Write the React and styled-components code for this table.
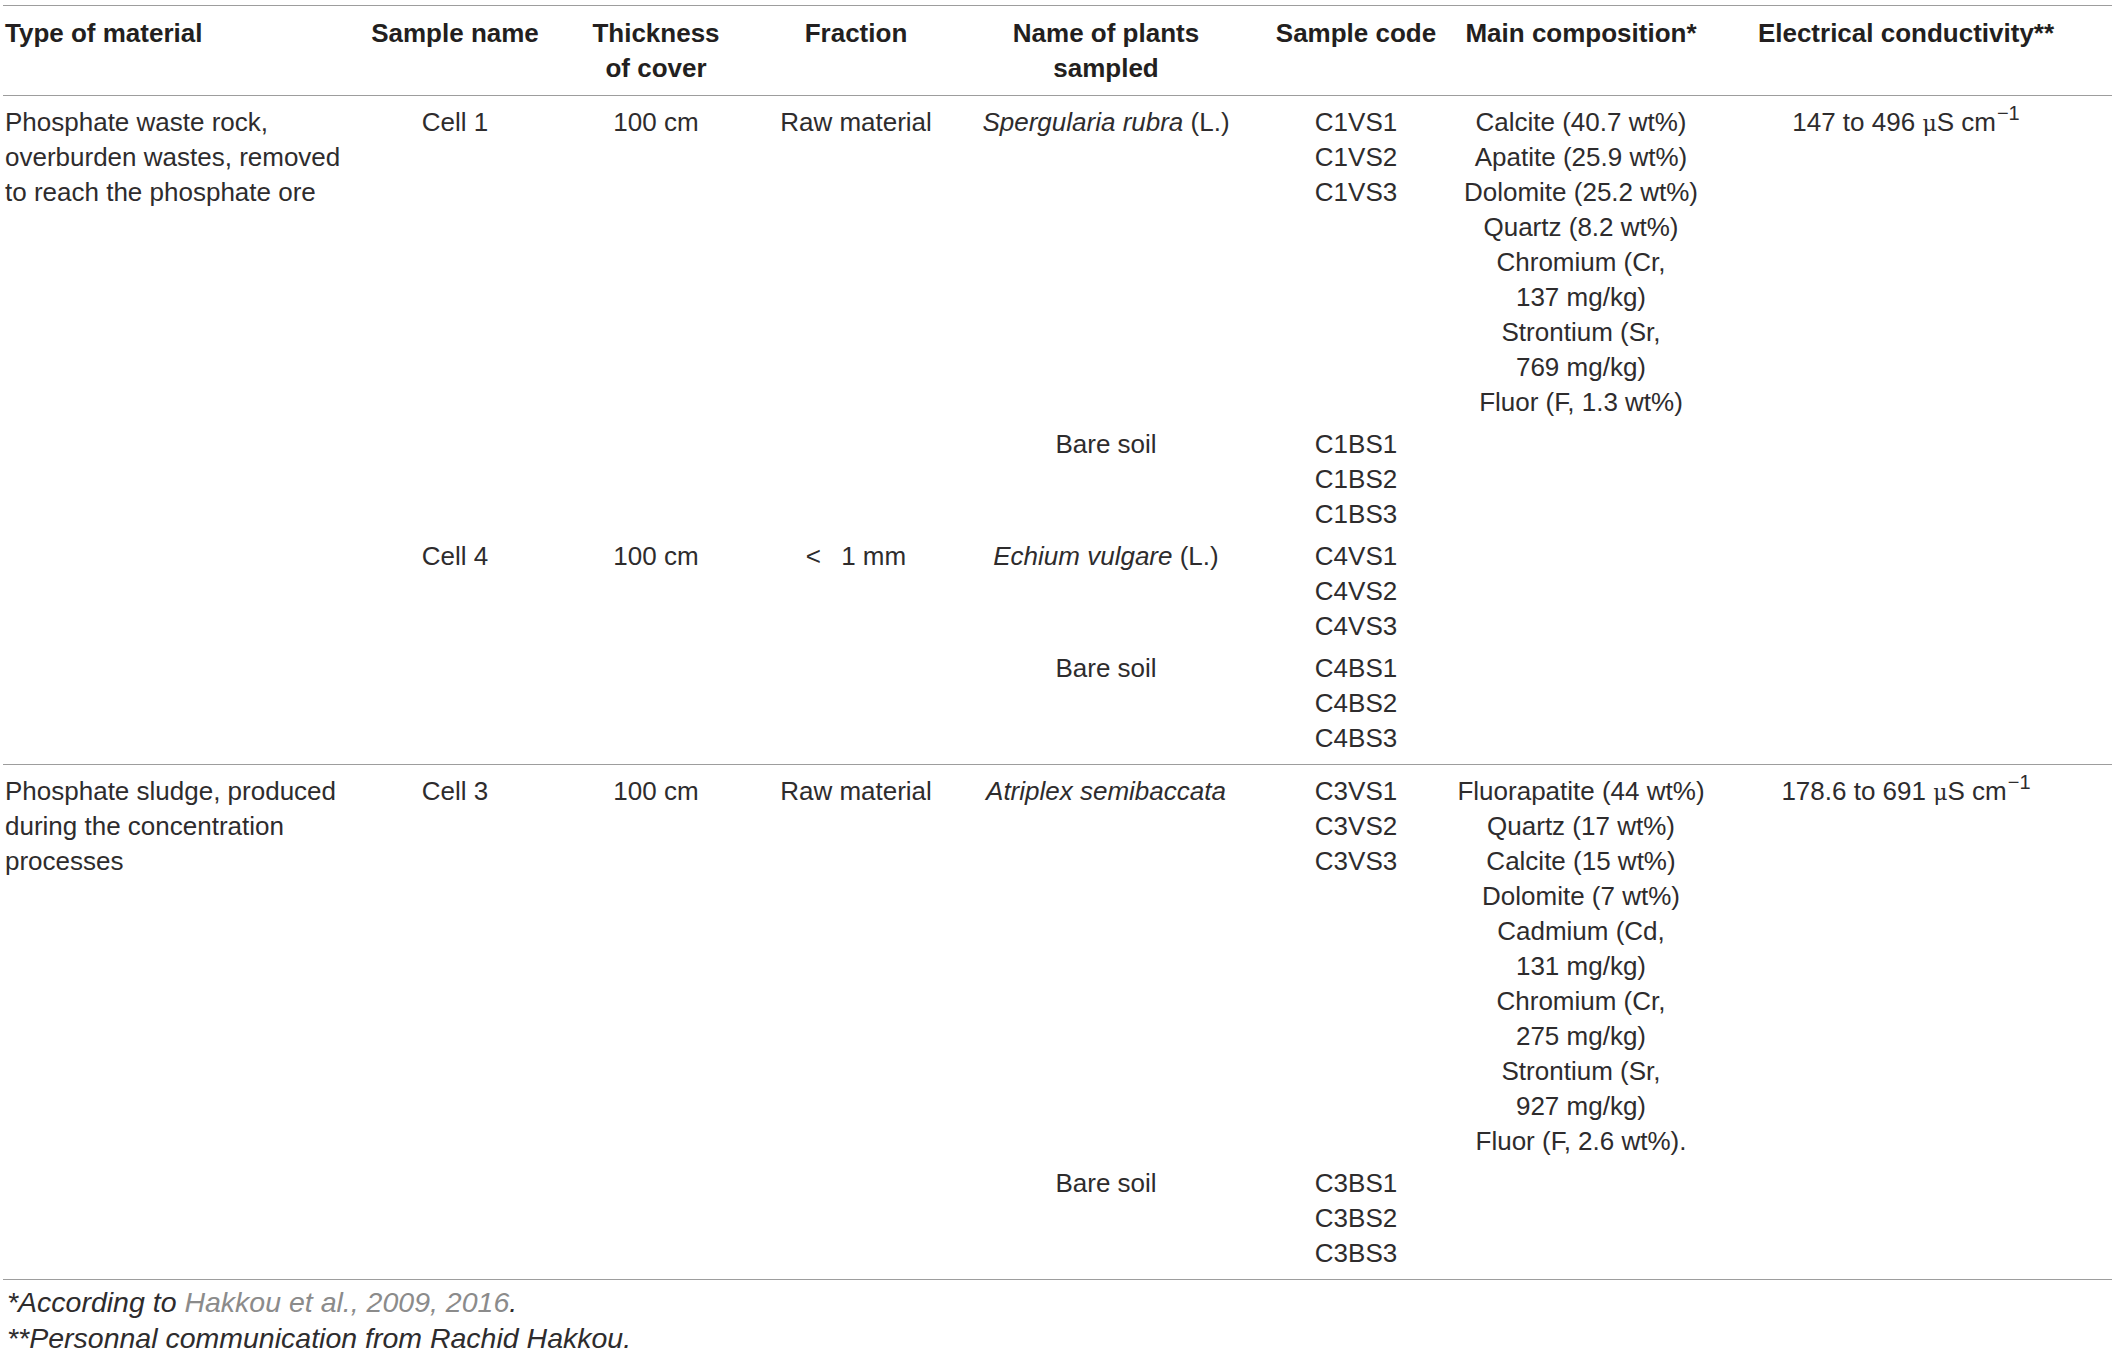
import React from 'react';
import styled, { createGlobalStyle } from 'styled-components';

const GlobalStyle = createGlobalStyle`
    html, body {
        margin: 0;
        padding: 0;
        background: #ffffff;
    }
    body {
        font-family: "Liberation Sans", Arial, sans-serif;
        color: #2e2c2d;
    }
`;

const Page = styled.div`
    padding: 5px 0 0 3px;
`;
const Table = styled.div`
    width: 2109px;
    border-top: 1px solid #9d9d9d;
`;
const Row = styled.div`
    display: grid;
    grid-template-columns: 356px 192px 210px 190px 310px 190px 260px 1fr;
    padding: 3.5px 11px 3.5px 0;
    font-size: 26px;
    line-height: 35px;
`;
const HeadRow = styled(Row)`
    font-weight: bold;
    color: #231f20;
    padding: 10px 11px 9px 0;
    border-bottom: 1px solid #9d9d9d;
`;
const Group = styled.div`
    padding: 5px 0;
    border-bottom: 1px solid #9d9d9d;
`;
const Cell = styled.div`
    text-align: ${p => (p.$left ? 'left' : 'center')};
    padding-left: ${p => (p.$left ? '2px' : '0')};
`;
const Line = styled.div`
    white-space: nowrap;
`;
const Plant = styled.i`
    font-style: italic;
`;
const Mu = styled.span`
    font-family: "DejaVu Serif", "Liberation Serif", serif;
    font-size: 22px;
`;
const Sup = styled.sup`
    font-size: 20px;
    line-height: 0;
    vertical-align: 11px;
    margin-left: 1px;
`;
const Notes = styled.div`
    padding: 4px 0 0 4px;
    font-size: 28.5px;
    line-height: 36px;
    font-style: italic;
`;
const Ref = styled.span`
    color: #8b8b8b;
`;

const headers = [
    ['Type of material'],
    ['Sample name'],
    ['Thickness', 'of cover'],
    ['Fraction'],
    ['Name of plants', 'sampled'],
    ['Sample code'],
    ['Main composition*'],
    ['Electrical conductivity**'],
];

const Conductivity = ({value}) => (
    <>{value} <Mu>μ</Mu>S cm<Sup>−1</Sup></>
);

const groups = [
    {
        material: 'Phosphate waste rock, overburden wastes, removed to reach the phosphate ore',
        rows: [
            {
                sample: 'Cell 1', thickness: '100 cm', fraction: 'Raw material',
                plant: <><Plant>Spergularia rubra</Plant> (L.)</>,
                codes: ['C1VS1', 'C1VS2', 'C1VS3'],
                composition: ['Calcite (40.7 wt%)', 'Apatite (25.9 wt%)', 'Dolomite (25.2 wt%)', 'Quartz (8.2 wt%)',
                    'Chromium (Cr,', '137 mg/kg)', 'Strontium (Sr,', '769 mg/kg)', 'Fluor (F, 1.3 wt%)'],
                ec: <Conductivity value="147 to 496" />,
            },
            { plant: 'Bare soil', codes: ['C1BS1', 'C1BS2', 'C1BS3'] },
            {
                sample: 'Cell 4', thickness: '100 cm', fraction: '<\u2002\u00a01 mm',
                plant: <><Plant>Echium vulgare</Plant> (L.)</>,
                codes: ['C4VS1', 'C4VS2', 'C4VS3'],
            },
            { plant: 'Bare soil', codes: ['C4BS1', 'C4BS2', 'C4BS3'] },
        ],
    },
    {
        material: 'Phosphate sludge, produced during the concentration processes',
        rows: [
            {
                sample: 'Cell 3', thickness: '100 cm', fraction: 'Raw material',
                plant: <Plant>Atriplex semibaccata</Plant>,
                codes: ['C3VS1', 'C3VS2', 'C3VS3'],
                composition: ['Fluorapatite (44 wt%)', 'Quartz (17 wt%)', 'Calcite (15 wt%)', 'Dolomite (7 wt%)',
                    'Cadmium (Cd,', '131 mg/kg)', 'Chromium (Cr,', '275 mg/kg)', 'Strontium (Sr,', '927 mg/kg)',
                    'Fluor (F, 2.6 wt%).'],
                ec: <Conductivity value="178.6 to 691" />,
            },
            { plant: 'Bare soil', codes: ['C3BS1', 'C3BS2', 'C3BS3'] },
        ],
    },
];

function App() {
    return (
        <Page>
            <GlobalStyle />
            <Table>
                <HeadRow>
                    {headers.map((lines, idx) => (
                        <Cell key={`head-${idx}`} $left={idx === 0}>
                            {lines.map(l => <Line key={l}>{l}</Line>)}
                        </Cell>
                    ))}
                </HeadRow>
                {groups.map((group, gi) => (
                    <Group key={`group-${gi}`}>
                        {group.rows.map((row, ri) => (
                            <Row key={`row-${gi}-${ri}`}>
                                <Cell $left>{ri === 0 ? group.material : null}</Cell>
                                <Cell>{row.sample}</Cell>
                                <Cell>{row.thickness}</Cell>
                                <Cell>{row.fraction}</Cell>
                                <Cell>{row.plant}</Cell>
                                <Cell>{row.codes.map(c => <Line key={c}>{c}</Line>)}</Cell>
                                <Cell>
                                    {row.composition
                                        ? row.composition.map((c, ci) => <Line key={`comp-${ci}`}>{c}</Line>)
                                        : null}
                                </Cell>
                                <Cell>{row.ec}</Cell>
                            </Row>
                        ))}
                    </Group>
                ))}
            </Table>
            <Notes>
                <div>*According to <Ref>Hakkou et al., 2009, 2016</Ref>.</div>
                <div>**Personnal communication from Rachid Hakkou.</div>
            </Notes>
        </Page>
    );
}

export default App;
